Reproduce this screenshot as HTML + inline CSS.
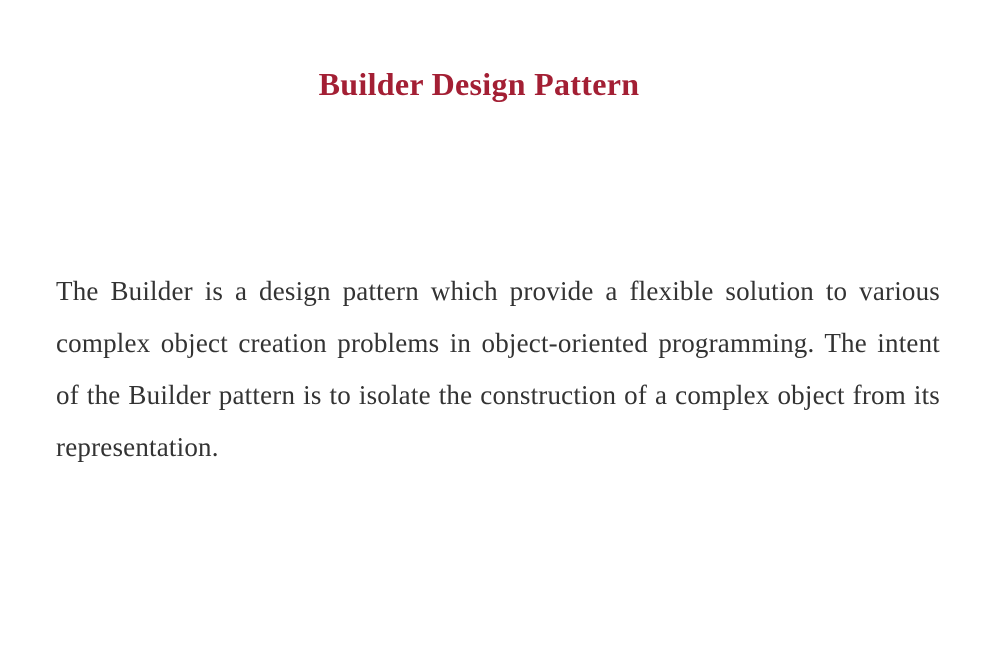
<!DOCTYPE html>
<html><head><meta charset="utf-8"><style>
html,body{margin:0;padding:0;background:#fff;width:1004px;height:652px;overflow:hidden}
body{font-family:"Liberation Serif",serif;position:relative}
h1{position:absolute;left:0;width:958px;top:66px;margin:0;text-align:center;font-size:32px;font-weight:bold;color:#a31f34;letter-spacing:0.3px}
.p{position:absolute;left:56px;width:884px;top:265px;font-size:27px;letter-spacing:0.2px;color:#333;line-height:52px}
.l{text-align:justify;text-align-last:justify;white-space:nowrap;display:block}
.l.last{text-align-last:left}
</style></head><body>
<h1>Builder Design Pattern</h1>
<div class="p">
<div class="l">The Builder is a design pattern which provide a flexible solution to various</div>
<div class="l">complex object creation problems in object-oriented programming. The intent</div>
<div class="l">of the Builder pattern is to isolate the construction of a complex object from its</div>
<div class="l last">representation.</div>
</div>
</body></html>
